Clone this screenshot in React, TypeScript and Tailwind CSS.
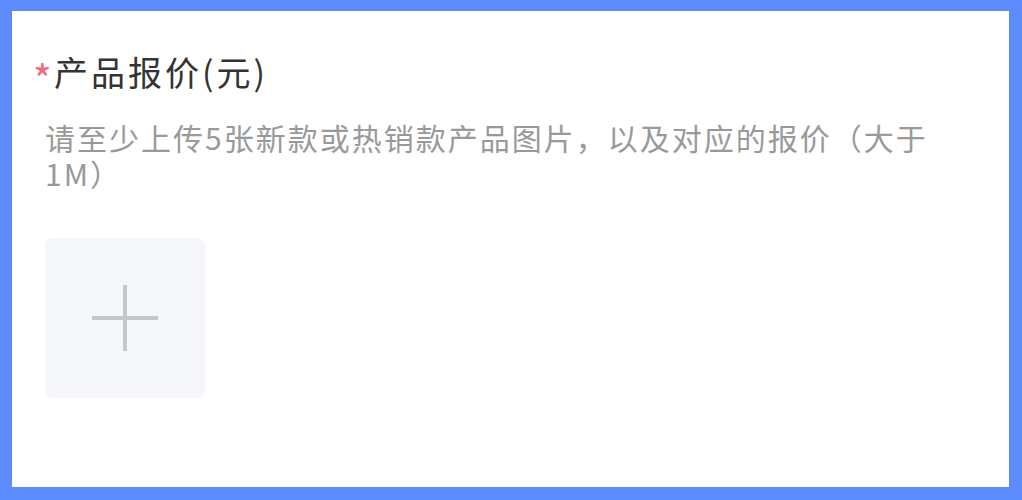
import React from 'react';

const font = { fontFamily: '"Noto Sans CJK SC", "Noto Sans", sans-serif' };

const App: React.FC = () => {
  return (
    <div className="w-[1022px] h-[500px] bg-[#5b8bfd] pt-[11px] pl-[12px] pr-[13px] pb-[13px]" style={font}>
      <div className="h-full bg-white pl-[33px] pr-[33px]">
        <div className="pt-[41px] -ml-[12px] flex items-center h-[81px] leading-[40px]">
          <span className="text-[40px] text-[#ef6a82] w-[21px] pt-[11px]">*</span>
          <span className="text-[34px] tracking-[3px] text-[#333333]">产品报价(元)</span>
        </div>
        <p className="mt-[27px] text-[30px] leading-[36px] tracking-[2px] text-[#999999]">
          请至少上传5张新款或热销款产品图片，以及对应的报价（大于1M）
        </p>
        <div className="mt-[47px] w-[160px] h-[160px] rounded-[8px] bg-[#f4f6f9] flex items-center justify-center">
          <svg width="66" height="66" viewBox="0 0 66 66">
            <rect x="0" y="31" width="66" height="4" fill="#c4c6cb" />
            <rect x="31" y="0" width="4" height="66" fill="#c4c6cb" />
          </svg>
        </div>
      </div>
    </div>
  );
};

export default App;
